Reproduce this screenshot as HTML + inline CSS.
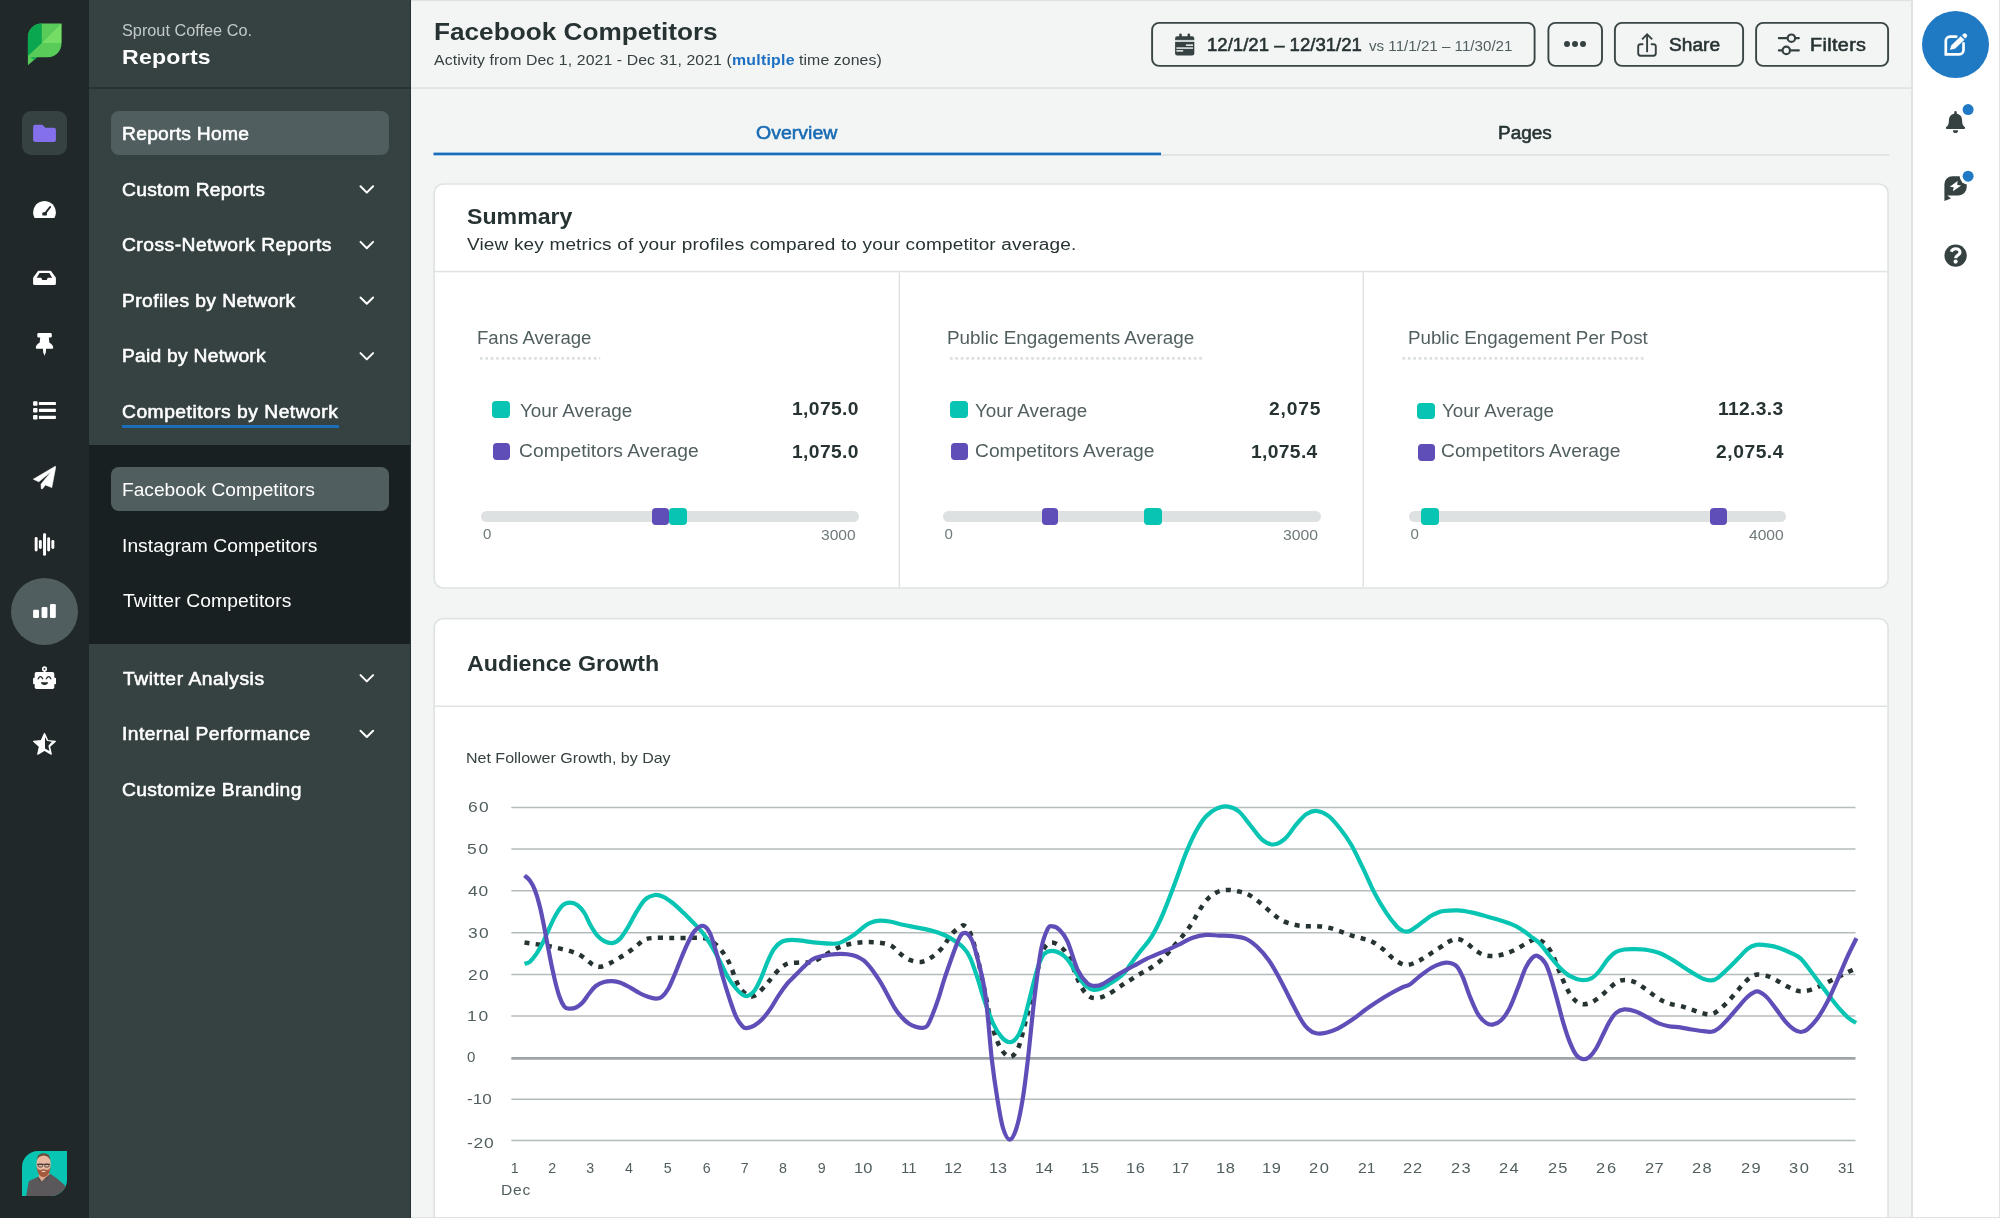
<!DOCTYPE html>
<html lang="en">
<head>
<meta charset="utf-8">
<title>Facebook Competitors - Reports</title>
<style>
html,body{margin:0;padding:0;}
body{width:2000px;height:1218px;overflow:hidden;position:relative;background:#f3f4f4;font-family:"Liberation Sans",sans-serif;}
.abs{position:absolute;}
.t{position:absolute;white-space:nowrap;line-height:1;transform-origin:0 0;}
#texts{position:absolute;left:0;top:0;width:2000px;height:1218px;will-change:transform;}
#rail{left:0;top:0;width:89px;height:1218px;background:#20282a;}
#side{left:89px;top:0;width:322px;height:1218px;background:#364141;}
#sidehead{left:89px;top:87px;width:322px;height:2px;background:#273333;}
#sub{left:89px;top:445px;width:322px;height:199px;background:#182022;}
.pill{position:absolute;left:111px;width:278px;height:44px;border-radius:8px;background:#515e5f;}
#main-top{left:411px;top:0;width:1501px;height:1px;background:#dee1e1;}
#main-left{left:410px;top:0;width:1px;height:1218px;background:#273333;}
#hdrline{left:411px;top:88px;width:1501px;height:1px;background:#dee1e1;}
#rrail{left:1911.1px;top:0;width:88.9px;height:1218px;background:#ffffff;}
#rrailb{left:1911.1px;top:0;width:1.6px;height:1218px;background:#dfe3e4;}
.btn{position:absolute;top:22.5px;height:43.5px;box-sizing:border-box;border:1.5px solid #364141;border-radius:8px;}
.card{position:absolute;left:433.5px;width:1455px;box-sizing:border-box;background:#fff;border:1px solid #dee1e1;border-radius:10px;}
.hl{position:absolute;background:#dee1e1;height:1px;}
.vl{position:absolute;background:#dee1e1;width:1px;}
.dot{position:absolute;height:0;border-top:2px dotted #c9cecf;}
.sq{position:absolute;height:16.8px;border-radius:3.7px;}
.sq.teal,.hd.teal{width:18px;}
.sq.purp,.hd.purp{width:16.8px;}
.teal{background:#08c4b2;}
.purp{background:#5f4eb8;}
.track{position:absolute;height:11px;border-radius:5.5px;background:#dee1e1;top:511px;}
.hd{position:absolute;top:508.1px;height:16.8px;border-radius:3.7px;}
svg{position:absolute;overflow:visible;}
</style>
</head>
<body>
<!-- left rail -->
<div id="rail" class="abs"></div>
<div id="side" class="abs"></div>
<div id="sidehead" class="abs"></div>
<div id="sub" class="abs"></div>
<div id="main-left" class="abs"></div>
<div class="pill" style="top:111px"></div>
<div class="pill" style="top:467px"></div>
<div class="abs" style="left:22px;top:111px;width:45px;height:44px;border-radius:9px;background:#364141"></div>
<div class="abs" style="left:11px;top:577.5px;width:67px;height:67px;border-radius:50%;background:#515e5f"></div>
<div class="abs" style="left:122px;top:425px;width:216.5px;height:3px;background:#1b6fb8"></div>
<svg width="420" height="1218" viewBox="0 0 420 1218" style="left:0;top:0">
<!-- sprout logo -->
<defs>
<clipPath id="leafclip"><path d="M41.6,23.4 H61.5 V43.6 A13.7,13.7 0 0 1 47.8,57.3 H37.2 L27.9,65.2 V37.1 A13.7,13.7 0 0 1 41.6,23.4 Z"/></clipPath>
<clipPath id="avclip"><path d="M38,1151 H67 V1180 A16,16 0 0 1 51,1196 H22 V1167 A16,16 0 0 1 38,1151 Z"/></clipPath>
</defs>
<g clip-path="url(#leafclip)">
<rect x="27" y="22" width="36" height="45" fill="#59cb59"/>
<polygon points="27,22 41.8,22 41.8,42.9 27.9,55.9 27,55.9" fill="#0ba650"/>
<polygon points="61.6,23.3 61.6,43 42,43" fill="#75dd66"/>
<polygon points="30.5,57.2 37.4,57.2 34.2,59.9" fill="#0ba650"/>
</g>
<!-- folder -->
<path d="M35.1,124.8 H41.8 Q42.6,124.8 43.2,125.4 L45.3,127.8 H53.9 Q55.9,127.8 55.9,129.8 V139.9 Q55.9,141.9 53.9,141.9 H35.1 Q33.1,141.9 33.1,139.9 V126.8 Q33.1,124.8 35.1,124.8 Z" fill="#8470eb"/>
<!-- dashboard gauge -->
<path d="M34.6,218.1 A11.4,11.4 0 1 1 54.4,218.1 Z" fill="#fff"/>
<path d="M50.2,206.9 L45,213.6" stroke="#20282a" stroke-width="1.8" stroke-linecap="round" fill="none"/>
<rect x="42.3" y="212.3" width="4.6" height="3.3" rx="1.2" fill="#20282a"/>
<!-- inbox -->
<path fill-rule="evenodd" fill="#fff" d="M38.6,270.8 H50.4 Q50.9,270.8 51.2,271.3 L55.6,277.2 Q55.9,277.7 55.9,278.2 V283.6 Q55.9,285.1 54.4,285.1 H34.6 Q33.1,285.1 33.1,283.6 V278.2 Q33.1,277.7 33.4,277.2 L37.8,271.3 Q38.1,270.8 38.6,270.8 Z M39.6,273 L36.7,277.7 H41.2 L42.3,279.9 H46.7 L47.8,277.7 H52.2 L49.3,273 Z"/>
<!-- pin -->
<path fill="#fff" d="M38.5,333.1 H50.6 Q51.8,333.1 51.8,334.3 V336.2 Q51.8,337.4 50.6,337.4 H48.8 L49.3,342.4 Q53.2,344.6 53.2,347.8 Q53.2,348.8 52.2,348.8 H46.1 L45.8,352.6 L44.5,355.8 L43.2,352.6 L42.9,348.8 H36.8 Q35.8,348.8 35.8,347.8 Q35.8,344.6 39.7,342.4 L40.2,337.4 H38.5 Q37.3,337.4 37.3,336.2 V334.3 Q37.3,333.1 38.5,333.1 Z"/>
<!-- list -->
<g fill="#fff">
<rect x="33.1" y="401.2" width="4.4" height="4.5" rx="0.8"/><rect x="38.9" y="401.9" width="17" height="3.1" rx="0.6"/>
<rect x="33.1" y="408.1" width="4.4" height="4.5" rx="0.8"/><rect x="38.9" y="408.8" width="17" height="3.1" rx="0.6"/>
<rect x="33.1" y="415.1" width="4.4" height="4.5" rx="0.8"/><rect x="38.9" y="415.8" width="17" height="3.1" rx="0.6"/>
</g>
<!-- paper plane -->
<path fill="#fff" stroke="#fff" stroke-width="0.6" stroke-linejoin="round" d="M55.3,466.3 L33.3,479.2 L38.8,481.8 L51.2,471.5 L41,484.2 L41.3,488.7 L42.3,488.9 L45.4,484.9 L51.8,487.6 L55.7,467 Z"/>
<!-- waveform -->
<g fill="#fff">
<rect x="34.7" y="537.1" width="2.9" height="14.3" rx="1.45"/>
<rect x="38.9" y="539.9" width="2.9" height="9" rx="1.45"/>
<rect x="43.05" y="533" width="3" height="22.8" rx="1.5"/>
<rect x="47.2" y="537.2" width="2.9" height="14.2" rx="1.45"/>
<rect x="51.4" y="539.9" width="2.9" height="9" rx="1.45"/>
</g>
<!-- bars (active) -->
<g fill="#fff">
<rect x="33.1" y="609.8" width="5.9" height="8.2" rx="1.2"/>
<rect x="41.6" y="607" width="5.8" height="11" rx="1.2"/>
<rect x="50" y="604" width="5.8" height="14" rx="1.2"/>
</g>
<!-- robot -->
<g>
<rect x="34.7" y="672" width="19.6" height="17" rx="1.8" fill="#fff"/>
<rect x="33.1" y="677.7" width="2.5" height="6.5" rx="0.8" fill="#fff"/>
<rect x="53.5" y="677.7" width="2.5" height="6.5" rx="0.8" fill="#fff"/>
<rect x="43.8" y="670.5" width="1.4" height="2.5" fill="#fff"/>
<circle cx="44.5" cy="668.9" r="1.75" fill="none" stroke="#fff" stroke-width="1.6"/>
<path d="M38.2,678.8 Q40.4,674.6 42.7,678.8" fill="none" stroke="#20282a" stroke-width="1.3" stroke-linecap="round"/>
<path d="M46.3,678.8 Q48.6,674.6 50.9,678.8" fill="none" stroke="#20282a" stroke-width="1.3" stroke-linecap="round"/>
<path d="M40.9,682.2 H48.1 Q47.6,684.9 44.5,684.9 Q41.4,684.9 40.9,682.2 Z" fill="#20282a"/>
</g>
<!-- star half -->
<path d="M44.5,733.5 L47.62,740.61 L55.34,741.38 L49.54,746.54 L51.2,754.12 L44.5,750.2 L37.8,754.12 L39.46,746.54 L33.66,741.38 L41.38,740.61 Z" fill="#fff" stroke="#fff" stroke-width="1.3" stroke-linejoin="round"/>
<path d="M45,737.1 L46.8,740.5 Q47,741 47.6,741.1 L51.9,741.7 L48.8,745.2 Q48.4,745.7 48.5,746.3 L49.4,750.9 L45,748.4 Z" fill="#20282a"/>
<!-- avatar -->
<g clip-path="url(#avclip)">
<rect x="21" y="1150" width="47" height="47" fill="#08c4b2"/>
<path d="M26,1197 L28.6,1182 Q29.5,1180.5 31,1180 L38.5,1176.8 L50.5,1174 L57,1178.5 L64.5,1185 L68,1190 V1197 Z" fill="#5b585b"/>
<path d="M38.6,1176.5 L41.5,1181.5 L44.5,1178.8 L49.6,1174.6 L48.5,1171 L39,1171 Z" fill="#dfa58c"/>
<ellipse cx="43.6" cy="1164" rx="7.2" ry="10.2" fill="#e9b8a0"/>
<path d="M36.8,1160.5 Q37,1153.3 43.6,1153.3 Q50.2,1153.3 50.4,1160.5 Q49,1155.6 43.6,1155.4 Q38.2,1155.6 36.8,1160.5 Z" fill="#6b4a38"/>
<path d="M36.5,1166 Q37.2,1173.5 40.3,1176 Q43.6,1178.2 46.9,1176 Q50,1173.5 50.7,1166 Q49.7,1170 46.8,1170 Q43.6,1168.6 40.4,1170 Q37.5,1170 36.5,1166 Z" fill="#a5593c"/>
<path d="M41,1171.2 Q43.6,1172.6 46.2,1171.2 Q43.6,1170.4 41,1171.2 Z" fill="#f4e6e0"/>
<path d="M37,1164.3 H50.2" stroke="#2b2a2c" stroke-width="0.9" fill="none"/>
<rect x="38.2" y="1164.1" width="4.3" height="2.9" rx="1.2" fill="none" stroke="#2b2a2c" stroke-width="0.8"/>
<rect x="44.7" y="1164.1" width="4.3" height="2.9" rx="1.2" fill="none" stroke="#2b2a2c" stroke-width="0.8"/>
<path d="M38.2,1177.2 L39.6,1181.2 L41.5,1181.5 Z M50.3,1174.2 L46.3,1179.6 L44.5,1178.8 Z" fill="#4a474a"/>
</g>
<!-- chevrons -->
<g fill="none" stroke="#fff" stroke-width="2" stroke-linecap="round" stroke-linejoin="round">
<path d="M360.5,186.3 L366.8,192.6 L373.1,186.3"/>
<path d="M360.5,241.9 L366.8,248.2 L373.1,241.9"/>
<path d="M360.5,297.5 L366.8,303.8 L373.1,297.5"/>
<path d="M360.5,353.1 L366.8,359.4 L373.1,353.1"/>
<path d="M360.5,675.1 L366.8,681.4 L373.1,675.1"/>
<path d="M360.5,730.7 L366.8,737 L373.1,730.7"/>
</g>
</svg>

<!-- main -->
<svg width="2000" height="90" viewBox="0 0 2000 90" style="left:0;top:0"><g fill="none" stroke="#3a4545" stroke-width="1.9">
<rect x="1152.1" y="22.9" width="382.5" height="43" rx="7"/>
<rect x="1548.4" y="22.9" width="53.6" height="43" rx="7"/>
<rect x="1614.9" y="22.9" width="128.2" height="43" rx="7"/>
<rect x="1756.1" y="22.9" width="132" height="43" rx="7"/>
</g></svg>
<!-- tabs -->
<!-- summary card -->
<svg width="2000" height="1218" viewBox="0 0 2000 1218" style="left:0;top:0"><g fill="#fff" stroke="#dfe3e4" stroke-width="1.7">
<rect x="434.2" y="184" width="1453.9" height="404" rx="9.2"/>
<rect x="434.2" y="618.6" width="1453.9" height="640" rx="9.2"/>
</g></svg>
<svg width="2000" height="400" viewBox="0 0 2000 400" style="left:0;top:0"><g stroke="#dce0e1" stroke-width="2.8" stroke-dasharray="2.71 2.71">
<line x1="479.9" x2="600.2" y1="358.4" y2="358.4"/>
<line x1="949.9" x2="1203.5" y1="358.4" y2="358.4"/>
<line x1="1402.4" x2="1646.2" y1="358.4" y2="358.4"/>
</g></svg>
<div class="sq teal" style="left:491.8px;top:401.3px"></div>
<div class="sq purp" style="left:493px;top:443px"></div>
<div class="sq teal" style="left:950px;top:401.3px"></div>
<div class="sq purp" style="left:951.2px;top:443px"></div>
<div class="sq teal" style="left:1416.7px;top:402.7px"></div>
<div class="sq purp" style="left:1418.1px;top:444.2px"></div>
<div class="track" style="left:480.5px;width:378px"></div>
<div class="track" style="left:943.2px;width:378px"></div>
<div class="track" style="left:1408.6px;width:377.5px"></div>
<div class="hd purp" style="left:652.3px"></div>
<div class="hd teal" style="left:668.5px"></div>
<div class="hd purp" style="left:1041.7px"></div>
<div class="hd teal" style="left:1144.3px"></div>
<div class="hd teal" style="left:1421px"></div>
<div class="hd purp" style="left:1709.8px"></div>
<svg width="2000" height="1218" viewBox="0 0 2000 1218" style="left:0;top:0"><g fill="#dfe3e4">
<rect x="411" y="0" width="1589" height="1.15"/>
<rect x="411" y="87.2" width="1500.2" height="1.7"/>
<rect x="1161" y="154.1" width="728" height="1.8"/>
<rect x="435" y="270.8" width="1452.3" height="1.5"/>
<rect x="898.6" y="272.3" width="1.5" height="314.9"/>
<rect x="1362.5" y="272.3" width="1.5" height="314.9"/>
<rect x="435" y="705.5" width="1452.3" height="1.5"/>
</g>
<rect x="433.5" y="152.6" width="727.5" height="2.7" fill="#186ebd"/>
</svg>
<!-- audience growth card -->
<svg width="2000" height="1218" viewBox="0 0 2000 1218" style="left:0;top:0">
<line x1="511.3" x2="1855.5" y1="807.4" y2="807.4" stroke="#b4bcbd" stroke-width="1.5"/>
<line x1="511.3" x2="1855.5" y1="849.1" y2="849.1" stroke="#b4bcbd" stroke-width="1.5"/>
<line x1="511.3" x2="1855.5" y1="890.8" y2="890.8" stroke="#b4bcbd" stroke-width="1.5"/>
<line x1="511.3" x2="1855.5" y1="932.7" y2="932.7" stroke="#b4bcbd" stroke-width="1.5"/>
<line x1="511.3" x2="1855.5" y1="974.5" y2="974.5" stroke="#b4bcbd" stroke-width="1.5"/>
<line x1="511.3" x2="1855.5" y1="1016.1" y2="1016.1" stroke="#b4bcbd" stroke-width="1.5"/>
<line x1="511.3" x2="1855.5" y1="1058.4" y2="1058.4" stroke="#9da5a7" stroke-width="2.9"/>
<line x1="511.3" x2="1855.5" y1="1099.3" y2="1099.3" stroke="#b4bcbd" stroke-width="1.5"/>
<line x1="511.3" x2="1855.5" y1="1140.6" y2="1140.6" stroke="#b4bcbd" stroke-width="1.5"/>
<path d="M524.5,942.6C526.2,942.8 531.1,943.5 534.7,944.0C538.3,944.5 542.4,944.9 546.3,945.6C550.1,946.3 553.9,947.2 557.8,948.1C561.6,949.0 565.8,949.8 569.4,950.9C573.0,952.0 576.3,953.1 579.3,954.7C582.3,956.3 585.0,958.7 587.5,960.5C590.0,962.3 591.9,964.4 594.1,965.4C596.3,966.4 598.0,967.1 600.7,966.7C603.5,966.3 607.3,964.5 610.6,962.9C613.9,961.3 617.2,959.2 620.5,957.2C623.8,955.2 627.4,952.8 630.4,950.6C633.4,948.4 636.2,945.9 638.7,944.0C641.2,942.1 642.5,940.3 645.3,939.3C648.0,938.3 651.1,938.1 655.2,937.9C659.3,937.7 664.8,937.9 670.0,937.9C675.2,937.9 681.0,937.9 686.5,937.9C692.0,937.9 698.9,937.4 703.0,937.9C707.1,938.4 708.5,939.0 711.3,940.7C714.0,942.4 717.0,945.4 719.5,948.1C722.0,950.9 724.2,954.0 726.1,957.2C728.0,960.4 729.5,963.2 731.1,967.1C732.8,971.0 734.4,976.6 736.0,980.3C737.6,984.0 738.8,986.7 741.0,989.3C743.2,991.9 746.7,994.9 749.2,995.9C751.7,996.9 753.0,996.9 755.8,995.1C758.5,993.3 763.0,988.2 765.7,985.2C768.5,982.2 769.8,979.9 772.3,977.0C774.8,974.1 777.9,970.2 780.6,967.9C783.4,965.6 785.2,964.3 788.8,963.4C792.4,962.5 797.9,962.8 802.0,962.4C806.1,962.0 808.1,963.5 813.6,961.3C819.1,959.1 829.8,951.9 835.0,949.2C840.2,946.6 841.2,946.5 844.8,945.4C848.3,944.3 852.4,943.4 856.3,942.9C860.1,942.4 864.0,942.1 867.9,942.1C871.8,942.1 875.5,942.1 879.4,942.6C883.2,943.1 887.7,943.7 891.0,945.4C894.3,947.1 896.2,950.4 899.2,952.8C902.2,955.2 905.4,958.2 909.1,959.7C912.8,961.2 917.6,962.4 921.5,961.9C925.4,961.4 928.8,959.2 932.2,956.9C935.6,954.6 938.8,951.8 942.1,947.9C945.4,944.0 949.0,937.2 952.0,933.8C955.0,930.3 958.2,928.6 960.3,927.2C962.4,925.8 962.8,924.6 964.4,925.6C966.0,926.6 968.1,928.2 970.2,933.0C972.3,937.8 974.3,944.6 976.8,954.5C979.3,964.4 982.5,980.9 985.0,992.4C987.5,1003.9 989.1,1014.7 991.6,1023.8C994.1,1032.9 996.9,1041.4 999.9,1046.9C1002.9,1052.4 1006.8,1056.5 1009.8,1056.8C1012.8,1057.1 1015.5,1053.7 1018.0,1048.5C1020.5,1043.3 1022.4,1033.7 1024.6,1025.4C1026.8,1017.2 1028.7,1009.5 1031.2,999.0C1033.7,988.5 1037.3,971.2 1039.5,962.7C1041.7,954.2 1042.4,951.2 1044.4,947.9C1046.5,944.5 1049.0,942.8 1051.8,942.6C1054.5,942.5 1058.0,944.5 1060.9,947.0C1063.8,949.5 1066.2,951.9 1069.2,957.8C1072.2,963.7 1076.1,976.3 1079.1,982.5C1082.1,988.7 1084.5,992.3 1087.3,994.9C1090.0,997.5 1092.3,998.2 1095.6,998.2C1098.9,998.2 1102.4,997.2 1107.1,994.9C1111.8,992.6 1118.1,987.7 1123.6,984.2C1129.1,980.7 1135.2,976.8 1139.9,974.0C1144.6,971.2 1147.7,970.0 1151.5,967.4C1155.3,964.8 1159.2,962.1 1163.0,958.4C1166.8,954.7 1171.0,949.3 1174.6,945.2C1178.2,941.1 1181.5,937.5 1184.5,933.6C1187.5,929.8 1190.2,926.0 1192.7,922.1C1195.2,918.2 1196.8,914.4 1199.3,910.5C1201.8,906.6 1204.6,902.1 1207.6,899.0C1210.6,895.9 1214.1,893.5 1217.5,892.0C1220.9,890.5 1224.6,890.0 1228.2,889.9C1231.8,889.8 1235.5,890.7 1238.9,891.5C1242.3,892.3 1245.2,892.9 1248.8,894.8C1252.4,896.7 1256.6,900.1 1260.4,903.1C1264.2,906.1 1268.3,910.1 1271.9,913.0C1275.5,915.9 1278.2,918.5 1281.8,920.4C1285.4,922.3 1289.6,923.5 1293.4,924.5C1297.2,925.5 1301.1,925.9 1304.9,926.2C1308.8,926.5 1312.7,926.0 1316.5,926.2C1320.3,926.4 1324.2,926.7 1328.0,927.5C1331.8,928.3 1335.8,929.8 1339.6,931.1C1343.4,932.4 1347.2,934.0 1351.1,935.3C1354.9,936.5 1359.1,937.5 1362.7,938.6C1366.3,939.7 1369.0,940.0 1372.6,941.9C1376.2,943.8 1380.5,947.2 1384.1,950.1C1387.7,953.0 1390.4,956.7 1394.0,959.2C1397.6,961.7 1401.8,964.6 1405.6,965.0C1409.4,965.4 1413.6,963.2 1417.1,961.7C1420.6,960.2 1423.2,958.3 1426.7,956.1C1430.2,953.9 1434.6,951.0 1438.2,948.7C1441.8,946.4 1444.9,943.8 1448.1,942.1C1451.3,940.5 1454.2,938.7 1457.2,938.8C1460.2,938.9 1463.4,941.1 1466.3,942.9C1469.2,944.7 1471.8,947.6 1474.5,949.5C1477.2,951.4 1479.8,953.4 1482.8,954.5C1485.8,955.6 1489.4,956.1 1492.7,956.1C1496.0,956.1 1499.0,955.5 1502.6,954.5C1506.2,953.5 1510.2,952.1 1514.1,950.3C1517.9,948.5 1522.4,945.5 1525.7,943.7C1529.0,941.9 1531.5,940.2 1533.9,939.6C1536.3,939.0 1537.9,939.4 1540.0,940.4C1542.1,941.4 1544.4,942.8 1546.6,945.4C1548.8,948.0 1551.0,951.6 1553.2,956.1C1555.4,960.6 1557.6,967.4 1559.8,972.6C1562.0,977.8 1564.2,983.2 1566.4,987.5C1568.6,991.8 1570.5,995.5 1573.0,998.2C1575.5,1001.0 1578.3,1003.3 1581.3,1004.0C1584.3,1004.7 1587.9,1004.0 1591.2,1002.6C1594.5,1001.2 1598.1,998.1 1601.1,995.7C1604.1,993.3 1606.5,990.6 1609.3,988.3C1612.0,986.0 1614.8,983.1 1617.6,981.7C1620.3,980.3 1622.8,979.9 1625.8,980.0C1628.8,980.1 1632.4,981.0 1635.7,982.5C1639.0,984.0 1642.3,986.8 1645.6,989.1C1648.9,991.4 1652.5,994.4 1655.5,996.5C1658.5,998.6 1661.0,1000.2 1663.8,1001.5C1666.5,1002.8 1669.0,1003.5 1672.0,1004.3C1675.0,1005.1 1678.6,1005.5 1681.9,1006.4C1685.2,1007.3 1688.5,1008.6 1691.8,1009.7C1695.1,1010.8 1698.5,1012.2 1701.7,1013.0C1704.9,1013.8 1708.0,1014.8 1710.8,1014.4C1713.5,1014.0 1715.6,1012.5 1718.2,1010.6C1720.8,1008.7 1723.8,1005.9 1726.5,1003.1C1729.2,1000.4 1732.0,997.2 1734.7,994.1C1737.5,991.0 1740.2,987.1 1743.0,984.2C1745.8,981.3 1748.7,978.3 1751.2,976.7C1753.7,975.1 1755.0,974.7 1757.8,974.6C1760.5,974.5 1764.4,975.2 1767.7,976.2C1771.0,977.2 1774.3,979.2 1777.6,980.9C1780.9,982.6 1784.5,985.0 1787.5,986.6C1790.5,988.2 1793.5,989.6 1795.8,990.4C1798.1,991.2 1799.1,991.4 1801.6,991.3C1804.1,991.2 1807.4,990.8 1810.6,989.9C1813.8,989.0 1817.2,987.3 1820.5,985.8C1823.8,984.3 1827.1,982.5 1830.4,980.9C1833.7,979.2 1837.3,977.4 1840.3,975.9C1843.3,974.4 1846.0,973.0 1848.6,971.8C1851.2,970.6 1854.8,969.0 1856.0,968.5" fill="none" stroke="#273333" stroke-width="4.5" stroke-dasharray="5 6.3" stroke-linejoin="round"/>
<path d="M524.5,963.8C525.4,963.5 527.8,963.4 529.8,961.8C531.8,960.1 534.2,957.1 536.4,953.9C538.6,950.6 540.8,946.7 543.0,942.3C545.2,937.9 547.4,932.2 549.6,927.5C551.8,922.8 554.0,918.0 556.2,914.3C558.4,910.6 560.5,907.1 562.8,905.2C565.1,903.3 567.7,902.7 570.2,902.7C572.7,902.7 575.3,903.6 577.6,905.2C579.9,906.9 582.0,909.2 584.2,912.6C586.4,916.0 588.6,921.9 590.8,925.8C593.0,929.6 595.2,933.2 597.4,935.7C599.6,938.2 601.5,939.8 604.0,941.0C606.5,942.2 609.5,943.6 612.3,943.1C615.0,942.6 617.8,941.1 620.5,938.2C623.2,935.3 626.0,930.3 628.8,925.8C631.5,921.3 634.2,915.4 637.0,911.0C639.8,906.6 642.3,902.1 645.3,899.4C648.3,896.7 652.2,895.4 655.2,895.0C658.2,894.6 660.4,895.5 663.4,896.9C666.4,898.3 670.0,900.9 673.3,903.5C676.6,906.1 679.9,909.4 683.2,912.6C686.5,915.8 689.8,919.1 693.1,922.5C696.4,925.9 700.0,929.4 703.0,933.2C706.0,937.1 708.5,941.1 711.3,945.6C714.0,950.1 716.8,955.3 719.5,960.5C722.2,965.7 725.0,972.3 727.8,977.0C730.5,981.7 733.5,985.5 736.0,988.5C738.5,991.5 740.7,993.6 742.6,994.8C744.5,996.0 745.7,996.5 747.6,995.9C749.5,995.3 752.0,993.9 754.2,991.0C756.4,988.1 758.6,983.4 760.8,978.6C763.0,973.8 765.2,967.1 767.4,962.1C769.6,957.1 771.5,952.3 774.0,948.9C776.5,945.5 779.2,943.0 782.2,941.5C785.2,940.0 788.8,939.9 792.1,939.8C795.4,939.7 798.4,940.3 802.0,940.7C805.6,941.1 808.1,941.8 813.6,942.3C819.1,942.8 830.1,944.0 835.3,943.7C840.5,943.4 841.8,941.8 844.8,940.4C847.8,939.0 850.2,937.4 853.0,935.5C855.8,933.6 858.5,931.0 861.3,928.9C864.0,926.8 866.4,924.5 869.5,923.1C872.6,921.7 876.1,920.8 879.7,920.6C883.3,920.4 887.2,921.1 891.0,921.8C894.8,922.5 897.0,923.6 902.5,924.8C908.0,926.0 918.6,927.7 924.1,928.9C929.6,930.1 932.0,930.7 935.5,931.8C939.0,932.9 942.1,933.9 945.4,935.5C948.7,937.1 952.3,939.2 955.3,941.3C958.3,943.4 961.1,945.1 963.6,947.9C966.1,950.6 968.0,953.1 970.2,957.8C972.4,962.5 974.3,968.5 976.8,975.9C979.3,983.3 982.2,994.3 985.0,1002.3C987.8,1010.3 990.5,1018.0 993.3,1023.8C996.0,1029.6 998.8,1033.9 1001.5,1037.0C1004.2,1040.1 1007.2,1042.2 1009.8,1042.2C1012.4,1042.2 1015.0,1040.1 1017.2,1037.0C1019.4,1033.9 1021.1,1029.6 1023.0,1023.8C1024.9,1018.0 1026.8,1009.7 1028.7,1002.3C1030.6,994.9 1032.7,985.8 1034.5,979.2C1036.3,972.6 1037.8,967.0 1039.5,962.7C1041.2,958.4 1042.2,955.6 1044.4,953.6C1046.6,951.6 1050.0,950.8 1052.7,950.8C1055.5,950.8 1058.4,952.2 1060.9,953.6C1063.4,955.0 1065.3,956.8 1067.5,959.4C1069.7,962.0 1072.2,966.3 1074.1,969.3C1076.0,972.3 1077.2,974.9 1079.1,977.6C1081.0,980.4 1083.2,983.8 1085.7,985.8C1088.2,987.8 1091.2,989.5 1093.9,989.9C1096.6,990.3 1099.0,989.4 1101.7,988.3C1104.5,987.2 1107.9,984.8 1110.4,983.3C1113.0,981.8 1114.5,981.1 1117.0,979.2C1119.5,977.3 1123.1,974.2 1125.3,971.8C1127.5,969.4 1127.6,968.3 1130.0,965.0C1132.4,961.7 1136.3,956.5 1139.9,951.8C1143.5,947.1 1147.7,943.2 1151.5,936.9C1155.3,930.6 1159.2,922.6 1163.0,913.8C1166.8,905.0 1170.8,894.3 1174.6,884.1C1178.4,873.9 1182.5,861.6 1186.1,852.8C1189.7,844.0 1192.7,837.3 1196.0,831.3C1199.3,825.2 1202.3,820.4 1205.9,816.5C1209.5,812.6 1213.8,809.9 1217.5,808.2C1221.2,806.6 1224.6,806.1 1228.2,806.6C1231.8,807.1 1235.2,808.4 1238.9,811.5C1242.6,814.6 1246.7,820.8 1250.5,825.5C1254.3,830.2 1258.2,836.4 1262.0,839.6C1265.8,842.8 1269.8,844.6 1273.6,844.5C1277.4,844.4 1281.2,842.1 1285.1,838.7C1288.9,835.3 1293.1,828.0 1296.7,823.9C1300.3,819.8 1303.3,816.1 1306.6,814.0C1309.9,811.9 1312.9,810.7 1316.5,811.0C1320.1,811.3 1324.2,812.8 1328.0,815.6C1331.8,818.4 1335.8,823.2 1339.6,828.0C1343.4,832.8 1347.2,837.9 1351.1,844.5C1354.9,851.1 1358.8,859.6 1362.7,867.6C1366.6,875.6 1370.4,885.0 1374.2,892.4C1378.0,899.8 1382.0,906.4 1385.8,912.2C1389.6,918.0 1394.5,924.0 1397.3,927.0C1400.0,930.0 1400.8,929.7 1402.3,930.5C1403.8,931.3 1405.0,931.6 1406.4,931.6C1407.8,931.6 1408.7,931.5 1410.5,930.6C1412.3,929.7 1414.9,927.8 1417.1,926.2C1419.3,924.6 1421.5,922.9 1423.7,921.2C1425.9,919.6 1428.1,917.7 1430.3,916.3C1432.5,914.9 1434.7,913.9 1436.9,913.0C1439.1,912.1 1440.0,911.4 1443.5,911.0C1447.0,910.6 1453.4,910.2 1458.0,910.4C1462.6,910.6 1466.8,911.5 1471.2,912.4C1475.6,913.3 1480.0,914.5 1484.4,915.7C1488.8,916.9 1493.2,918.1 1497.6,919.5C1502.0,920.9 1506.9,922.3 1510.8,923.9C1514.7,925.5 1517.4,926.8 1520.7,928.9C1524.0,931.0 1527.4,933.8 1530.6,936.3C1533.8,938.8 1536.8,940.4 1540.0,943.7C1543.2,947.0 1546.6,952.1 1549.9,956.1C1553.2,960.1 1556.5,964.4 1559.8,967.7C1563.1,971.0 1566.1,973.9 1569.7,975.9C1573.3,977.9 1577.7,979.6 1581.3,980.0C1584.9,980.4 1588.2,979.9 1591.2,978.4C1594.2,976.9 1596.7,974.2 1599.4,971.0C1602.2,967.8 1605.0,962.6 1607.7,959.4C1610.5,956.2 1613.2,953.6 1615.9,952.0C1618.7,950.4 1620.9,950.0 1624.2,949.5C1627.5,949.0 1631.9,949.1 1635.7,949.2C1639.5,949.3 1643.5,949.4 1647.3,950.0C1651.1,950.6 1654.9,951.4 1658.8,952.8C1662.7,954.2 1666.6,956.4 1670.4,958.6C1674.2,960.8 1678.1,963.5 1681.9,966.0C1685.8,968.5 1689.9,971.2 1693.5,973.4C1697.1,975.5 1700.4,977.7 1703.4,978.9C1706.4,980.1 1709.1,980.6 1711.6,980.4C1714.1,980.2 1715.5,979.6 1718.2,977.6C1721.0,975.6 1724.8,971.7 1728.1,968.5C1731.4,965.3 1734.7,961.9 1738.0,958.6C1741.3,955.3 1744.9,951.0 1747.9,948.7C1750.9,946.4 1752.9,945.5 1756.2,944.9C1759.5,944.3 1763.9,944.9 1767.7,945.4C1771.5,945.9 1775.5,946.7 1779.3,947.9C1783.1,949.1 1787.2,951.0 1790.8,952.8C1794.4,954.6 1797.4,955.6 1800.7,958.6C1804.0,961.6 1807.3,966.7 1810.6,971.0C1813.9,975.3 1817.2,979.8 1820.5,984.2C1823.8,988.6 1827.1,993.1 1830.4,997.4C1833.7,1001.6 1837.3,1006.3 1840.3,1009.7C1843.3,1013.1 1846.0,1015.8 1848.6,1018.0C1851.2,1020.2 1854.8,1022.1 1856.0,1022.9" fill="none" stroke="#08c4b2" stroke-width="4.2" stroke-linejoin="round" stroke-linecap="butt"/>
<path d="M524.5,875.5C525.4,876.3 528.1,878.1 529.8,880.4C531.5,882.7 533.1,885.2 534.7,889.5C536.4,893.8 538.1,899.4 539.7,906.0C541.4,912.6 543.0,920.9 544.6,929.1C546.2,937.4 548.0,947.2 549.6,955.5C551.2,963.8 552.9,971.7 554.5,978.6C556.1,985.5 557.9,992.1 559.5,996.8C561.1,1001.5 562.8,1004.7 564.4,1006.7C566.0,1008.7 567.5,1008.5 569.4,1008.6C571.3,1008.7 573.8,1008.5 576.0,1007.5C578.2,1006.5 580.4,1004.8 582.6,1002.5C584.8,1000.2 587.0,996.2 589.2,993.5C591.4,990.8 593.3,987.9 595.8,986.0C598.3,984.1 601.2,982.7 604.0,981.9C606.8,981.1 609.5,981.0 612.3,981.1C615.0,981.2 617.5,981.6 620.5,982.7C623.5,983.8 627.1,985.9 630.4,987.7C633.7,989.5 637.3,991.9 640.3,993.5C643.3,995.1 646.0,996.2 648.6,997.1C651.2,998.0 653.8,998.8 656.0,998.7C658.2,998.7 659.7,998.5 661.8,996.8C663.9,995.1 666.2,992.4 668.4,988.5C670.6,984.6 672.8,978.9 675.0,973.7C677.2,968.5 679.4,962.4 681.6,957.2C683.8,952.0 686.0,946.7 688.2,942.3C690.4,937.9 692.3,933.5 694.8,930.8C697.3,928.0 700.5,925.5 703.0,925.8C705.5,926.1 707.4,928.0 709.6,932.4C711.8,936.8 714.0,944.8 716.2,952.2C718.4,959.6 720.6,969.3 722.8,977.0C725.0,984.7 727.2,991.8 729.4,998.4C731.6,1005.0 733.8,1011.9 736.0,1016.6C738.2,1021.3 740.8,1024.6 742.6,1026.5C744.4,1028.4 744.8,1028.2 746.7,1028.1C748.6,1027.9 751.6,1027.1 754.2,1025.6C756.8,1024.1 759.6,1021.9 762.4,1019.0C765.1,1016.1 768.0,1012.3 770.7,1008.3C773.5,1004.3 776.1,999.2 778.9,995.1C781.6,991.0 784.5,986.9 787.2,983.6C790.0,980.3 792.4,978.3 795.4,975.3C798.4,972.3 802.0,968.3 805.3,965.4C808.6,962.5 810.2,959.9 815.2,958.0C820.2,956.1 829.0,954.6 835.3,954.1C841.6,953.6 847.9,953.9 853.0,955.3C858.1,956.7 861.8,958.4 866.2,962.7C870.7,967.0 875.0,973.5 879.7,980.9C884.4,988.3 890.5,1001.1 894.3,1007.3C898.1,1013.5 900.0,1015.2 902.5,1018.0C905.0,1020.8 906.9,1022.3 909.1,1023.8C911.3,1025.2 913.5,1026.0 915.7,1026.7C917.9,1027.4 920.4,1028.1 922.3,1027.9C924.2,1027.7 925.6,1027.8 927.3,1025.7C928.9,1023.6 930.3,1020.2 932.2,1015.5C934.1,1010.8 936.6,1004.0 938.8,997.4C941.0,990.8 942.1,985.5 945.4,975.9C948.7,966.3 955.4,946.8 958.6,939.6C961.8,932.5 962.5,933.4 964.4,933.0C966.3,932.6 968.4,934.4 970.2,937.1C972.0,939.9 972.6,940.3 975.1,949.5C977.6,958.7 982.2,974.2 985.0,992.4C987.8,1010.6 989.7,1040.8 991.7,1058.5C993.8,1076.2 995.4,1086.9 997.3,1098.5C999.2,1110.1 1000.9,1121.2 1003,1128C1005.1,1134.8 1007.5,1139.6 1009.8,1139.6C1012.0,1139.6 1014.3,1134.8 1016.5,1128C1018.7,1121.2 1020.9,1110.1 1022.8,1098.5C1024.7,1086.9 1026.1,1074.9 1028,1058.5C1029.9,1042.1 1032.0,1018.2 1034.2,1000C1036.4,981.8 1038.8,961.4 1041.1,949.5C1043.3,937.6 1045.8,932.8 1047.7,928.9C1049.6,925.0 1050.8,926.3 1052.7,926.4C1054.6,926.5 1056.8,927.2 1059.3,929.7C1061.8,932.2 1064.5,934.7 1067.5,941.3C1070.5,947.9 1074.1,962.3 1077.4,969.3C1080.7,976.3 1084.5,980.5 1087.3,983.3C1090.0,986.0 1091.5,985.6 1093.9,985.8C1096.3,986.0 1097.9,986.3 1101.7,984.5C1105.5,982.7 1111.7,978.2 1117.0,975.1C1122.3,972.0 1128.6,968.7 1133.5,966.0C1138.4,963.3 1141.6,961.3 1146.5,958.9C1151.4,956.5 1157.5,954.2 1163.0,951.8C1168.5,949.4 1174.5,946.6 1179.5,944.3C1184.5,941.9 1188.3,939.3 1192.7,937.7C1197.1,936.1 1201.5,935.2 1205.9,934.9C1210.3,934.5 1214.7,935.4 1219.1,935.6C1223.5,935.8 1227.9,935.6 1232.3,936.1C1236.7,936.6 1241.4,936.8 1245.5,938.6C1249.6,940.4 1253.2,943.2 1257.1,946.8C1260.9,950.4 1265.0,955.0 1268.6,960.0C1272.2,965.0 1273.3,967.0 1278.5,976.5C1283.7,986.0 1294.7,1008.5 1299.6,1017.2C1304.5,1025.9 1305.2,1026.0 1307.9,1028.7C1310.7,1031.4 1313.1,1032.6 1316.1,1033.3C1319.1,1034.0 1322.4,1033.6 1326.0,1032.8C1329.6,1032.0 1333.2,1030.9 1337.6,1028.7C1342.0,1026.5 1347.2,1023.2 1352.4,1019.6C1357.6,1016.0 1363.4,1011.1 1368.9,1007.3C1374.4,1003.4 1380.2,999.7 1385.4,996.5C1390.6,993.3 1396.2,990.3 1400.3,988.3C1404.4,986.2 1406.9,986.3 1410.2,984.2C1413.5,982.1 1416.5,978.6 1420.1,975.9C1423.7,973.1 1428.0,969.8 1431.6,967.7C1435.2,965.6 1438.8,964.3 1441.5,963.5C1444.2,962.7 1445.6,962.3 1448.1,962.7C1450.6,963.1 1453.9,963.5 1456.4,966.0C1458.9,968.5 1460.8,972.6 1463.0,977.6C1465.2,982.6 1467.1,989.7 1469.6,995.7C1472.1,1001.8 1475.0,1009.4 1477.8,1013.9C1480.5,1018.4 1483.6,1021.1 1486.1,1022.9C1488.6,1024.7 1490.2,1025.0 1492.7,1024.6C1495.2,1024.2 1498.2,1023.1 1500.9,1020.5C1503.7,1017.9 1506.5,1014.1 1509.2,1008.9C1512.0,1003.7 1514.7,996.0 1517.4,989.1C1520.2,982.2 1523.2,972.9 1525.7,967.7C1528.2,962.5 1530.4,959.8 1532.3,957.8C1534.2,955.8 1535.1,955.0 1537.2,955.8C1539.3,956.6 1542.9,959.6 1545.0,962.7C1547.1,965.8 1548.0,968.5 1549.9,974.3C1551.8,980.1 1554.3,989.4 1556.5,997.4C1558.7,1005.4 1560.9,1014.7 1563.1,1022.1C1565.3,1029.5 1567.5,1036.4 1569.7,1041.9C1571.9,1047.4 1574.1,1052.2 1576.3,1055.1C1578.5,1058.0 1580.7,1058.9 1582.9,1059.2C1585.1,1059.5 1587.3,1058.6 1589.5,1056.8C1591.7,1055.0 1593.9,1052.1 1596.1,1048.5C1598.3,1044.9 1600.5,1039.7 1602.7,1035.3C1604.9,1030.9 1607.1,1025.8 1609.3,1022.1C1611.5,1018.4 1613.4,1015.1 1615.9,1013.0C1618.4,1010.9 1620.9,1009.7 1624.2,1009.4C1627.5,1009.1 1631.9,1010.1 1635.7,1011.4C1639.5,1012.7 1643.5,1015.2 1647.3,1017.2C1651.1,1019.2 1655.2,1021.9 1658.8,1023.4C1662.4,1024.9 1665.1,1025.5 1668.7,1026.2C1672.3,1026.9 1676.5,1026.9 1680.3,1027.4C1684.1,1028.0 1687.9,1028.9 1691.8,1029.5C1695.7,1030.1 1700.1,1030.8 1703.4,1031.2C1706.7,1031.6 1709.1,1032.1 1711.6,1031.7C1714.1,1031.3 1715.5,1030.9 1718.2,1028.7C1721.0,1026.5 1724.8,1022.4 1728.1,1018.8C1731.4,1015.2 1734.7,1011.0 1738.0,1007.3C1741.3,1003.6 1744.7,999.2 1747.9,996.5C1751.1,993.8 1754.0,991.3 1757.0,991.3C1760.0,991.3 1762.9,993.6 1766.1,996.5C1769.3,999.4 1772.7,1004.6 1776.0,1008.9C1779.3,1013.2 1782.9,1018.7 1785.9,1022.1C1788.9,1025.5 1791.6,1027.8 1794.1,1029.5C1796.6,1031.2 1798.5,1032.0 1800.7,1032.0C1802.9,1032.0 1804.5,1031.7 1807.3,1029.5C1810.0,1027.3 1813.9,1023.3 1817.2,1018.8C1820.5,1014.3 1823.8,1008.6 1827.1,1002.3C1830.4,996.0 1833.7,988.3 1837.0,980.9C1840.3,973.5 1843.7,964.9 1846.9,957.8C1850.2,950.7 1854.9,941.5 1856.5,938.3" fill="none" stroke="#5f4eb8" stroke-width="4.2" stroke-linejoin="round" stroke-linecap="butt"/>
</svg>
<!-- right rail -->
<div id="rrail" class="abs"></div><div id="rrailb" class="abs"></div>
<div class="abs" style="left:1922px;top:11px;width:67px;height:67px;border-radius:50%;background:#2079c3"></div>
<div class="abs" style="left:411px;top:1216.5px;width:1589px;height:1.5px;background:#dfe3e4"></div>
<div class="abs" style="left:1998.6px;top:0;width:1.4px;height:1218px;background:#dfe3e4"></div>
<svg width="2000" height="300" viewBox="0 0 2000 300" style="left:0;top:0">
<!-- calendar -->
<g fill="#364141">
<rect x="1179.2" y="33.4" width="2.6" height="5" rx="1.3"/>
<rect x="1187.5" y="33.4" width="2.6" height="5" rx="1.3"/>
<path d="M1177.3,36.3 H1192.1 Q1194.3,36.3 1194.3,38.5 V39.9 H1175.1 V38.5 Q1175.1,36.3 1177.3,36.3 Z"/>
<rect x="1175.1" y="39.9" width="19.2" height="2.3" fill="#cdd2d2"/>
<path d="M1175.1,42.1 H1194.3 V53.3 Q1194.3,55.5 1192.1,55.5 H1177.3 Q1175.1,55.5 1175.1,53.3 Z"/>
<rect x="1185.9" y="44.4" width="7.1" height="1.5" fill="#f3f4f4"/>
<rect x="1176.4" y="47.2" width="16.6" height="1.8" fill="#cdd2d2"/>
<rect x="1176.4" y="50.1" width="6.8" height="1.5" fill="#f3f4f4"/>
</g>
<!-- more dots -->
<g fill="#364141"><circle cx="1567" cy="44.1" r="3"/><circle cx="1575" cy="44.1" r="3"/><circle cx="1583" cy="44.1" r="3"/></g>
<!-- share -->
<g fill="none" stroke="#364141" stroke-width="1.9" stroke-linecap="round" stroke-linejoin="round">
<path d="M1642.6,44.2 H1640.6 Q1638.2,44.2 1638.2,46.6 V53.3 Q1638.2,55.7 1640.6,55.7 H1653.4 Q1655.8,55.7 1655.8,53.3 V46.6 Q1655.8,44.2 1653.4,44.2 H1651.6"/>
<path d="M1647.1,51.4 V35.2"/>
<path d="M1642.1,39.4 L1647.1,34.4 L1652.2,39.4" stroke-linecap="butt" stroke-linejoin="miter"/>
</g>
<!-- filters -->
<g fill="#f3f4f4" stroke="#364141" stroke-width="2.2" stroke-linecap="round">
<path d="M1778.9,38.2 H1798.8"/>
<path d="M1778.9,50.4 H1798.8"/>
<circle cx="1791.4" cy="38.2" r="3.7"/>
<circle cx="1786.3" cy="50.4" r="3.7"/>
</g>
<!-- compose -->
<g fill="none" stroke="#fff" stroke-width="2.7" stroke-linecap="round" stroke-linejoin="miter">
<path d="M1956.3,36.6 H1950 A4.2,4.2 0 0 0 1945.8,40.8 V54.3 H1959.3 A4.2,4.2 0 0 0 1963.5,50.1 V43.4"/>
</g>
<path d="M1950.2,49.5 L1951.7,45.2 L1960.7,36.5 L1964.2,39.7 L1955,48.4 Z" fill="#fff" stroke="#fff" stroke-width="0.5" stroke-linejoin="round"/>
<path d="M1962,35.2 L1963.6,33.7 Q1964.8,32.7 1966,33.8 L1966.8,34.6 Q1967.8,35.8 1966.7,36.9 L1965.2,38.4 Z" fill="#fff"/>
<!-- bell -->
<path fill="#364141" d="M1954.3,112.2 Q1954.3,111 1955.5,111 Q1956.7,111 1956.7,112.2 V113.4 C1960,114.2 1962.1,116.6 1962.1,120 C1962.1,123 1962.4,124.6 1963.6,126 L1965,127.3 Q1965.7,128.9 1964,128.9 H1947 Q1945.3,128.9 1946,127.3 L1947.4,126 C1948.6,124.6 1948.9,123 1948.9,120 C1948.9,116.6 1951,114.2 1954.3,113.4 Z"/>
<path fill="#364141" d="M1952.9,130.3 H1958.1 A2.6,2.8 0 0 1 1952.9,130.3 Z"/>
<circle cx="1968.1" cy="109.6" r="5.5" fill="#2079c3"/>
<!-- chat bolt -->
<path fill="#364141" d="M1952.4,176.2 H1966.7 V187.3 A8.2,8.2 0 0 1 1958.5,195.5 H1947.4 L1950.9,198.5 L1944.4,200.9 V184.2 A8,8 0 0 1 1952.4,176.2 Z"/>
<circle cx="1968.1" cy="176.2" r="8.4" fill="#fff"/>
<circle cx="1968.1" cy="176.2" r="5.5" fill="#2079c3"/>
<path fill="#fff" d="M1957.6,180.9 L1949.8,186.7 L1953.7,187.2 L1952.9,191.2 L1961.2,185.5 L1957.3,184.9 Z"/>
<!-- help -->
<circle cx="1955.6" cy="255.6" r="11.15" fill="#364141"/>
<path d="M1951.3,251.8 C1952,249.7 1953.7,248.7 1955.7,248.7 C1958.2,248.7 1960,250.2 1960,252.3 C1960,255.2 1955.6,255.3 1955.6,258.2" fill="none" stroke="#fff" stroke-width="3.1"/>
<circle cx="1955.6" cy="261.6" r="2.1" fill="#fff"/>
</svg>

<div id="texts">
<div class="t" style="left:121.68px;top:23.00px;font-size:15.7px;color:#c3c9c9;transform:scaleX(1.0372);">Sprout Coffee Co.</div>
<div class="t" style="left:122.07px;top:46.00px;font-size:21px;color:#ffffff;font-weight:700;letter-spacing:0.212px;transform:scaleX(1.1000);">Reports</div>
<div class="t" style="left:121.91px;top:126.00px;font-size:17.5px;color:#ffffff;-webkit-text-stroke:0.55px #ffffff;letter-spacing:0.240px;transform:scaleX(1.1000);">Reports Home</div>
<div class="t" style="left:122.00px;top:182.00px;font-size:17.5px;color:#ffffff;-webkit-text-stroke:0.55px #ffffff;letter-spacing:0.259px;transform:scaleX(1.1000);">Custom Reports</div>
<div class="t" style="left:122.00px;top:237.00px;font-size:17.5px;color:#ffffff;-webkit-text-stroke:0.55px #ffffff;letter-spacing:0.430px;transform:scaleX(1.1000);">Cross-Network Reports</div>
<div class="t" style="left:121.91px;top:293.00px;font-size:17.5px;color:#ffffff;-webkit-text-stroke:0.55px #ffffff;letter-spacing:0.375px;transform:scaleX(1.1000);">Profiles by Network</div>
<div class="t" style="left:121.91px;top:348.00px;font-size:17.5px;color:#ffffff;-webkit-text-stroke:0.55px #ffffff;letter-spacing:0.226px;transform:scaleX(1.1000);">Paid by Network</div>
<div class="t" style="left:122.00px;top:404.00px;font-size:17.5px;color:#ffffff;-webkit-text-stroke:0.55px #ffffff;letter-spacing:0.452px;transform:scaleX(1.1000);">Competitors by Network</div>
<div class="t" style="left:122.05px;top:482.00px;font-size:17.5px;color:#ffffff;transform:scaleX(1.0954);">Facebook Competitors</div>
<div class="t" style="left:121.77px;top:538.00px;font-size:17.5px;color:#ffffff;letter-spacing:0.031px;transform:scaleX(1.1000);">Instagram Competitors</div>
<div class="t" style="left:122.68px;top:593.00px;font-size:17.5px;color:#ffffff;letter-spacing:0.131px;transform:scaleX(1.1000);">Twitter Competitors</div>
<div class="t" style="left:122.94px;top:671.00px;font-size:17.5px;color:#ffffff;-webkit-text-stroke:0.55px #ffffff;letter-spacing:0.508px;transform:scaleX(1.1000);">Twitter Analysis</div>
<div class="t" style="left:121.89px;top:726.00px;font-size:17.5px;color:#ffffff;-webkit-text-stroke:0.55px #ffffff;letter-spacing:0.399px;transform:scaleX(1.1000);">Internal Performance</div>
<div class="t" style="left:122.00px;top:782.00px;font-size:17.5px;color:#ffffff;-webkit-text-stroke:0.55px #ffffff;letter-spacing:0.324px;transform:scaleX(1.1000);">Customize Branding</div>
<div class="t" style="left:433.60px;top:20.00px;font-size:24.7px;color:#273333;font-weight:700;transform:scaleX(1.0605);">Facebook Competitors</div>
<div class="t" style="left:433.72px;top:53.00px;font-size:14.4px;color:#364141;letter-spacing:0.087px;transform:scaleX(1.1000);">Activity from Dec 1, 2021 - Dec 31, 2021 (</div>
<div class="t" style="left:731.61px;top:53.00px;font-size:14.4px;color:#1c70c4;font-weight:700;letter-spacing:0.235px;transform:scaleX(1.1000);">multiple</div>
<div class="t" style="left:799.15px;top:53.00px;font-size:14.4px;color:#364141;letter-spacing:0.090px;transform:scaleX(1.1000);">time zones)</div>
<div class="t" style="left:1206.72px;top:36.00px;font-size:18px;color:#273333;-webkit-text-stroke:0.55px #273333;transform:scaleX(1.0318);">12/1/21 – 12/31/21</div>
<div class="t" style="left:1368.75px;top:39.00px;font-size:14.7px;color:#515e5f;transform:scaleX(1.0314);">vs 11/1/21 – 11/30/21</div>
<div class="t" style="left:1669.32px;top:36.00px;font-size:18px;color:#273333;-webkit-text-stroke:0.55px #273333;transform:scaleX(1.0637);">Share</div>
<div class="t" style="left:1810.28px;top:36.00px;font-size:18px;color:#273333;-webkit-text-stroke:0.55px #273333;letter-spacing:0.320px;transform:scaleX(1.1000);">Filters</div>
<div class="t" style="left:756.19px;top:124.00px;font-size:18px;color:#176bb3;-webkit-text-stroke:0.55px #176bb3;transform:scaleX(1.0850);">Overview</div>
<div class="t" style="left:1497.84px;top:124.00px;font-size:18px;color:#273333;-webkit-text-stroke:0.55px #273333;transform:scaleX(1.0538);">Pages</div>
<div class="t" style="left:466.85px;top:206.00px;font-size:22.4px;color:#273333;font-weight:700;transform:scaleX(1.0334);">Summary</div>
<div class="t" style="left:467.28px;top:236.00px;font-size:17.3px;color:#273333;letter-spacing:0.140px;transform:scaleX(1.1000);">View key metrics of your profiles compared to your competitor average.</div>
<div class="t" style="left:477.10px;top:330.00px;font-size:17.5px;color:#515e5f;transform:scaleX(1.0626);">Fans Average</div>
<div class="t" style="left:946.98px;top:330.00px;font-size:17.5px;color:#515e5f;transform:scaleX(1.0785);">Public Engagements Average</div>
<div class="t" style="left:1408.09px;top:330.00px;font-size:17.5px;color:#515e5f;transform:scaleX(1.0718);">Public Engagement Per Post</div>
<div class="t" style="left:519.81px;top:403.00px;font-size:17.5px;color:#515e5f;transform:scaleX(1.0783);">Your Average</div>
<div class="t" style="left:519.02px;top:443.00px;font-size:17.5px;color:#515e5f;letter-spacing:0.015px;transform:scaleX(1.1000);">Competitors Average</div>
<div class="t" style="left:975.41px;top:403.00px;font-size:17.5px;color:#515e5f;transform:scaleX(1.0783);">Your Average</div>
<div class="t" style="left:974.62px;top:443.00px;font-size:17.5px;color:#515e5f;transform:scaleX(1.1000);">Competitors Average</div>
<div class="t" style="left:1442.22px;top:403.00px;font-size:17.5px;color:#515e5f;transform:scaleX(1.0744);">Your Average</div>
<div class="t" style="left:1441.32px;top:443.00px;font-size:17.5px;color:#515e5f;transform:scaleX(1.1000);">Competitors Average</div>
<div class="t" style="left:792.23px;top:401.00px;font-size:17.5px;color:#273333;font-weight:700;letter-spacing:0.341px;transform:scaleX(1.1000);">1,075.0</div>
<div class="t" style="left:792.23px;top:444.00px;font-size:17.5px;color:#273333;font-weight:700;letter-spacing:0.341px;transform:scaleX(1.1000);">1,075.0</div>
<div class="t" style="left:1269.27px;top:401.00px;font-size:17.5px;color:#273333;font-weight:700;letter-spacing:0.751px;transform:scaleX(1.1000);">2,075</div>
<div class="t" style="left:1250.63px;top:444.00px;font-size:17.5px;color:#273333;font-weight:700;letter-spacing:0.316px;transform:scaleX(1.1000);">1,075.4</div>
<div class="t" style="left:1717.63px;top:401.00px;font-size:17.5px;color:#273333;font-weight:700;letter-spacing:0.291px;transform:scaleX(1.1000);">112.3.3</div>
<div class="t" style="left:1715.57px;top:444.00px;font-size:17.5px;color:#273333;font-weight:700;letter-spacing:0.491px;transform:scaleX(1.1000);">2,075.4</div>
<div class="t" style="left:482.92px;top:526.00px;font-size:15px;color:#6e797a;">0</div>
<div class="t" style="left:821.08px;top:527.00px;font-size:15px;color:#6e797a;transform:scaleX(1.0403);">3000</div>
<div class="t" style="left:944.42px;top:526.00px;font-size:15px;color:#6e797a;">0</div>
<div class="t" style="left:1283.17px;top:527.00px;font-size:15px;color:#6e797a;transform:scaleX(1.0465);">3000</div>
<div class="t" style="left:1410.42px;top:526.00px;font-size:15px;color:#6e797a;">0</div>
<div class="t" style="left:1748.95px;top:527.00px;font-size:15px;color:#6e797a;transform:scaleX(1.0411);">4000</div>
<div class="t" style="left:466.89px;top:653.00px;font-size:22.5px;color:#273333;font-weight:700;transform:scaleX(1.0321);">Audience Growth</div>
<div class="t" style="left:466.17px;top:750.00px;font-size:15px;color:#364141;transform:scaleX(1.0672);">Net Follower Growth, by Day</div>
<div class="t" style="left:467.87px;top:799.00px;font-size:15px;color:#515e5f;letter-spacing:1.183px;transform:scaleX(1.1600);">60</div>
<div class="t" style="left:467.44px;top:841.00px;font-size:15px;color:#515e5f;letter-spacing:1.548px;transform:scaleX(1.1600);">50</div>
<div class="t" style="left:468.31px;top:883.00px;font-size:15px;color:#515e5f;letter-spacing:0.799px;transform:scaleX(1.1600);">40</div>
<div class="t" style="left:467.89px;top:925.00px;font-size:15px;color:#515e5f;letter-spacing:1.160px;transform:scaleX(1.1600);">30</div>
<div class="t" style="left:467.89px;top:967.00px;font-size:15px;color:#515e5f;letter-spacing:1.160px;transform:scaleX(1.1600);">20</div>
<div class="t" style="left:467.33px;top:1008.00px;font-size:15px;color:#515e5f;letter-spacing:1.650px;transform:scaleX(1.1600);">10</div>
<div class="t" style="left:467.12px;top:1049.00px;font-size:15px;color:#515e5f;">0</div>
<div class="t" style="left:466.98px;top:1091.00px;font-size:15px;color:#515e5f;transform:scaleX(1.1389);">-10</div>
<div class="t" style="left:466.97px;top:1135.00px;font-size:15px;color:#515e5f;letter-spacing:0.635px;transform:scaleX(1.1600);">-20</div>
<div class="t" style="left:510.74px;top:1161.00px;font-size:14.2px;color:#515e5f;">1</div>
<div class="t" style="left:548.19px;top:1161.00px;font-size:14.2px;color:#515e5f;">2</div>
<div class="t" style="left:586.27px;top:1161.00px;font-size:14.2px;color:#515e5f;">3</div>
<div class="t" style="left:625.04px;top:1161.00px;font-size:14.2px;color:#515e5f;">4</div>
<div class="t" style="left:663.75px;top:1161.00px;font-size:14.2px;color:#515e5f;">5</div>
<div class="t" style="left:702.76px;top:1161.00px;font-size:14.2px;color:#515e5f;">6</div>
<div class="t" style="left:740.78px;top:1161.00px;font-size:14.2px;color:#515e5f;">7</div>
<div class="t" style="left:779.00px;top:1161.00px;font-size:14.2px;color:#515e5f;">8</div>
<div class="t" style="left:817.77px;top:1161.00px;font-size:14.2px;color:#515e5f;">9</div>
<div class="t" style="left:854.42px;top:1161.00px;font-size:14.2px;color:#515e5f;letter-spacing:0.075px;transform:scaleX(1.1600);">10</div>
<div class="t" style="left:900.84px;top:1161.00px;font-size:14.2px;color:#515e5f;transform:scaleX(1.0563);">11</div>
<div class="t" style="left:943.63px;top:1161.00px;font-size:14.2px;color:#515e5f;transform:scaleX(1.1479);">12</div>
<div class="t" style="left:989.49px;top:1161.00px;font-size:14.2px;color:#515e5f;transform:scaleX(1.1377);">13</div>
<div class="t" style="left:1034.92px;top:1161.00px;font-size:14.2px;color:#515e5f;transform:scaleX(1.1550);">14</div>
<div class="t" style="left:1080.64px;top:1161.00px;font-size:14.2px;color:#515e5f;transform:scaleX(1.1422);">15</div>
<div class="t" style="left:1126.17px;top:1161.00px;font-size:14.2px;color:#515e5f;letter-spacing:0.416px;transform:scaleX(1.1600);">16</div>
<div class="t" style="left:1172.00px;top:1161.00px;font-size:14.2px;color:#515e5f;transform:scaleX(1.0915);">17</div>
<div class="t" style="left:1216.17px;top:1161.00px;font-size:14.2px;color:#515e5f;letter-spacing:0.416px;transform:scaleX(1.1600);">18</div>
<div class="t" style="left:1261.97px;top:1161.00px;font-size:14.2px;color:#515e5f;letter-spacing:0.596px;transform:scaleX(1.1600);">19</div>
<div class="t" style="left:1308.73px;top:1161.00px;font-size:14.2px;color:#515e5f;letter-spacing:1.403px;transform:scaleX(1.1600);">20</div>
<div class="t" style="left:1357.57px;top:1161.00px;font-size:14.2px;color:#515e5f;transform:scaleX(1.1010);">21</div>
<div class="t" style="left:1403.23px;top:1161.00px;font-size:14.2px;color:#515e5f;letter-spacing:0.835px;transform:scaleX(1.1600);">22</div>
<div class="t" style="left:1450.78px;top:1161.00px;font-size:14.2px;color:#515e5f;letter-spacing:1.227px;transform:scaleX(1.1600);">23</div>
<div class="t" style="left:1499.23px;top:1161.00px;font-size:14.2px;color:#515e5f;letter-spacing:1.266px;transform:scaleX(1.1600);">24</div>
<div class="t" style="left:1548.03px;top:1161.00px;font-size:14.2px;color:#515e5f;letter-spacing:0.937px;transform:scaleX(1.1600);">25</div>
<div class="t" style="left:1596.23px;top:1161.00px;font-size:14.2px;color:#515e5f;letter-spacing:1.485px;transform:scaleX(1.1600);">26</div>
<div class="t" style="left:1644.78px;top:1161.00px;font-size:14.2px;color:#515e5f;letter-spacing:0.404px;transform:scaleX(1.1600);">27</div>
<div class="t" style="left:1692.18px;top:1161.00px;font-size:14.2px;color:#515e5f;letter-spacing:1.054px;transform:scaleX(1.1600);">28</div>
<div class="t" style="left:1740.78px;top:1161.00px;font-size:14.2px;color:#515e5f;letter-spacing:1.235px;transform:scaleX(1.1600);">29</div>
<div class="t" style="left:1789.23px;top:1161.00px;font-size:14.2px;color:#515e5f;letter-spacing:1.399px;transform:scaleX(1.1600);">30</div>
<div class="t" style="left:1838.05px;top:1161.00px;font-size:14.2px;color:#515e5f;transform:scaleX(1.0532);">31</div>
<div class="t" style="left:501.45px;top:1183.00px;font-size:14.2px;color:#515e5f;letter-spacing:0.648px;transform:scaleX(1.1000);">Dec</div>
</div>
</body>
</html>
